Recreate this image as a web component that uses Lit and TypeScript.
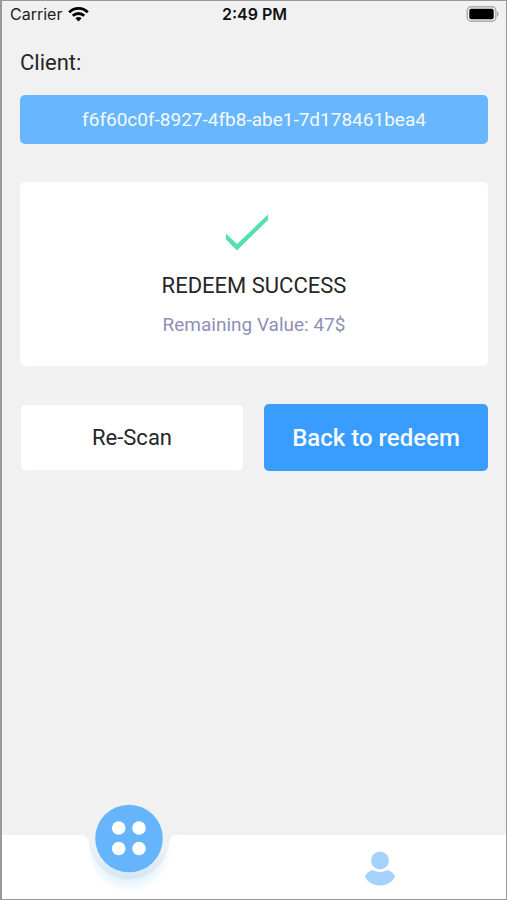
import { LitElement, html, css } from "lit";
import { customElement, property } from "lit/decorators.js";

@customElement("status-bar")
class StatusBar extends LitElement {
  @property() carrier = "";
  @property() time = "";

  static styles = css`
    :host {
      display: grid;
      grid-template-columns: 1fr auto 1fr;
      align-items: center;
      height: 26px;
      padding: 0 7px 0 8px;
      font: 400 16px/20px Inter, "Liberation Sans", sans-serif;
      color: #222;
    }
    .carrier {
      display: flex;
      align-items: center;
      gap: 6px;
    }
    .time {
      font-weight: 600;
      color: #111;
    }
    .battery {
      justify-self: end;
    }
    svg {
      display: block;
    }
  `;

  render() {
    return html`
      <div class="carrier">
        <span>${this.carrier}</span>
        <svg width="21" height="16" viewBox="0 0 21 16" aria-hidden="true">
          <g fill="none" stroke="#000" stroke-width="2.8">
            <path d="M1.2 6.2C6.4 1 14.6 1 19.8 6.2" />
            <path d="M4.8 9.8c3.2-3.1 8.2-3.1 11.4 0" />
          </g>
          <path d="M7.4 12.2c1.7-1.5 4.5-1.5 6.2 0l-3.1 3.2z" />
        </svg>
      </div>
      <div class="time">${this.time}</div>
      <svg class="battery" width="33" height="16" viewBox="0 0 33 16" aria-hidden="true">
        <rect x="1.2" y="0.7" width="28.6" height="14.6" rx="4" fill="none" stroke="#aaa" stroke-width="1.4" />
        <rect x="3.3" y="2.8" width="24.4" height="10.4" rx="2" />
        <path d="M31 5.500c2 .6 2 4.400 0 5z" fill="#aaa" />
      </svg>
    `;
  }
}

@customElement("tab-bar")
class TabBar extends LitElement {
  static styles = css`
    :host {
      display: block;
    }
    nav {
      display: grid;
      grid-template-columns: 1fr 1fr;
      height: 64px;
      padding-left: 1px;
      background: #fff;
    }
    button {
      position: relative;
      display: flex;
      justify-content: center;
      align-items: center;
      border: 0;
      padding: 2px 0 0;
      background: none;
      cursor: pointer;
    }
    svg {
      display: block;
    }
    .raised {
      position: absolute;
      left: 50%;
      bottom: 0;
      transform: translateX(-50%);
    }
  `;

  render() {
    return html`
      <nav aria-label="Main">
        <button aria-label="Menu" aria-current="page">
          <svg class="raised" width="110" height="100" viewBox="0 0 110 100" aria-hidden="true">
            <defs>
              <linearGradient id="well" x1="0" y1="36" x2="0" y2="81" gradientUnits="userSpaceOnUse">
                <stop offset="0" stop-color="#f1f1f1" />
                <stop offset="0.35" stop-color="#edf0f2" />
                <stop offset="1" stop-color="#d3e6f4" />
              </linearGradient>
              <radialGradient id="glow" cx="55" cy="52" r="42" gradientUnits="userSpaceOnUse">
                <stop offset="0.6" stop-color="#dceeff" />
                <stop offset="1" stop-color="#dceeff" stop-opacity="0" />
              </radialGradient>
            </defs>
            <path d="M9 40h92v60H9z" fill="url(#glow)" />
            <path d="M7 35v1c5 0 7 3 8 8A40.200 40.200 0 0 0 95 44c1-5 3-8 8-8v-1z" fill="url(#well)" />
            <circle cx="55" cy="39.500" r="33.800" fill="#66b5fc" />
            <g fill="#fff">
              <circle cx="44.700" cy="29" r="6.800" />
              <circle cx="65" cy="29" r="6.800" />
              <circle cx="44.700" cy="49.500" r="6.800" />
              <circle cx="65" cy="49.500" r="6.800" />
            </g>
          </svg>
        </button>
        <button aria-label="Profile">
          <svg width="32" height="36" viewBox="0 0 32 36" aria-hidden="true" fill="#a4d2fd">
            <circle cx="16" cy="10.500" r="9" />
            <path d="M9 20C12.500 22.600 19.500 22.600 23 20C26.500 20.800 29.500 23 31 26.500C25.500 38.500 6.500 38.500 1 26.500C2.500 23 5.500 20.800 9 20z" />
          </svg>
        </button>
      </nav>
    `;
  }
}

@customElement("app-root")
class AppRoot extends LitElement {
  static styles = css`
    :host {
      display: flex;
      flex-direction: column;
      box-sizing: border-box;
      min-height: 100vh;
      border: 1px solid #999;
      border-left-width: 2px;
      background: #f1f1f1;
      font-family: Roboto, "Liberation Sans", sans-serif;
      color: #262626;
    }
    main {
      flex: 1;
      padding: 22px 18px 20px;
    }
    h1,
    h2,
    p {
      margin: 0;
      font-weight: 400;
    }
    h1 {
      font-size: 22px;
      line-height: 28px;
    }
    .client {
      margin-top: 18px;
      border-radius: 5px;
      background: #68b6fd;
      color: #f4faff;
      font-size: 19px;
      line-height: 49px;
      text-align: center;
    }
    .card {
      display: flex;
      flex-direction: column;
      align-items: center;
      margin-top: 38px;
      padding: 32px 16px 28px;
      border-radius: 5px;
      background: #fff;
    }
    .card svg {
      display: block;
      margin-right: 14px;
    }
    h2 {
      margin-top: 21px;
      font-size: 22px;
      line-height: 28px;
    }
    .card p {
      margin-top: 12px;
      font-size: 19px;
      line-height: 26px;
      color: #8f8fb5;
    }
    .actions {
      display: grid;
      grid-template-columns: 1fr 1fr;
      gap: 20px;
      margin-top: 38px;
    }
    .actions button {
      height: 67px;
      border: 0;
      padding: 0;
      border-radius: 5px;
      font-family: inherit;
      cursor: pointer;
    }
    .actions .plain {
      border: 1px solid #f1f1f1;
      background: #fff;
      color: #262626;
      font-size: 22px;
    }
    .actions .primary {
      background: #399cff;
      color: #f6fbff;
      font-size: 24px;
      font-weight: 500;
    }
  `;

  render() {
    return html`
      <status-bar carrier="Carrier" time="2:49 PM"></status-bar>
      <main>
        <h1>Client:</h1>
        <p class="client">f6f60c0f-8927-4fb8-abe1-7d178461bea4</p>
        <section class="card">
          <svg width="42" height="37" viewBox="0 0 42 37" aria-hidden="true">
            <path d="M0 19.500L11 30L42 0.500V6L11 36.500L0 25.500z" fill="#56e0ae" />
          </svg>
          <h2>REDEEM SUCCESS</h2>
          <p>Remaining Value: 47$</p>
        </section>
        <div class="actions">
          <button class="plain">Re-Scan</button>
          <button class="primary">Back to redeem</button>
        </div>
      </main>
      <tab-bar></tab-bar>
    `;
  }
}
